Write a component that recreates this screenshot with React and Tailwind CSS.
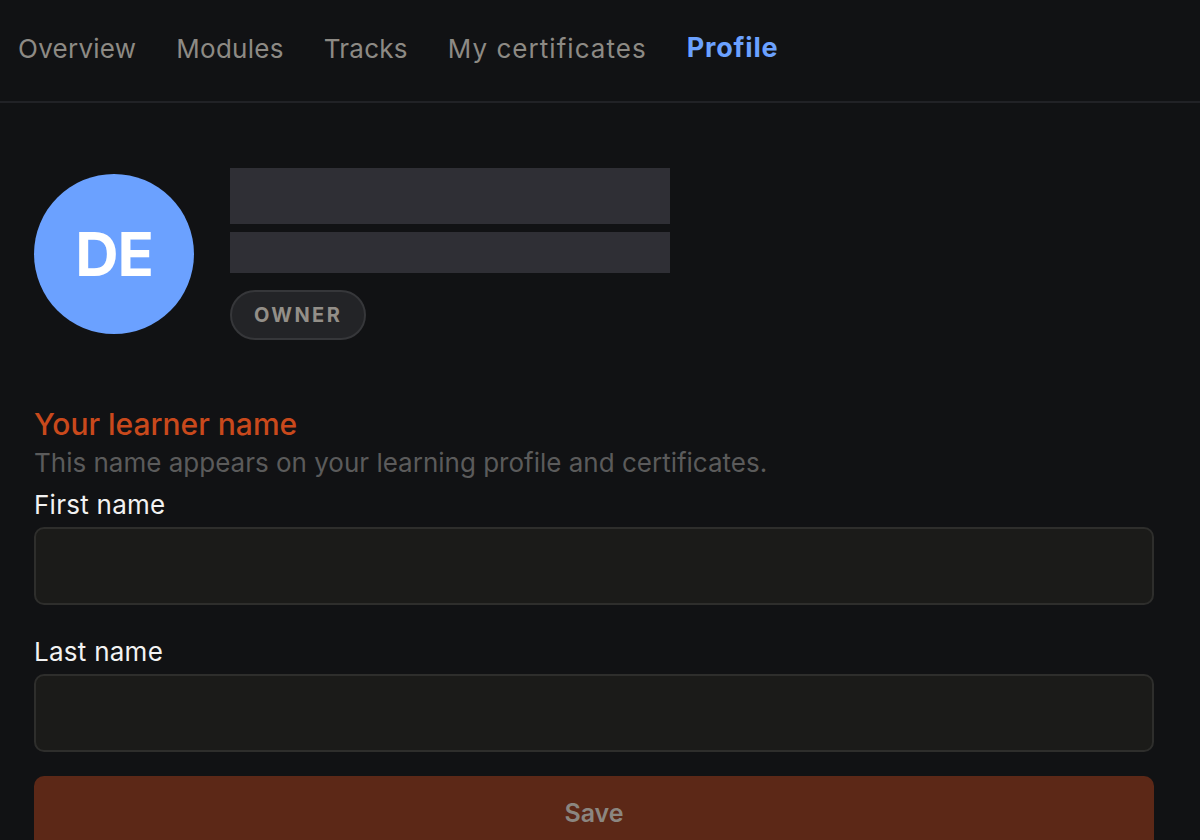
import React from 'react';

const font = { fontFamily: 'Inter, "Noto Sans", sans-serif' };

function NavBar() {
  const items = [
    { label: 'Overview', cls: 'tracking-[0.01em]' },
    { label: 'Modules', cls: 'tracking-[0.01em]' },
    { label: 'Tracks', cls: 'tracking-[0.01em]' },
    { label: 'My certificates', cls: 'tracking-[0.04em]' },
  ];
  return (
    <nav className="h-[103px] border-b-2 border-[#212226] flex items-center gap-10 px-[18px] pb-[4px]">
      {items.map((item) => (
        <span key={item.label} className={`text-[26px] text-[#8d8a84] ${item.cls}`}>
          {item.label}
        </span>
      ))}
      <span className="text-[27px] tracking-[0.03em] font-bold text-[#6ba1ff]">Profile</span>
    </nav>
  );
}

function Field({ label }) {
  return (
    <div className="flex flex-col">
      <label className="text-[26px] tracking-[0.01em] text-[#f2f2f2] leading-[32px] mb-[6px]">{label}</label>
      <input className="h-[78px] w-full rounded-[10px] bg-[#1b1b19] border-2 border-[#2e2e2c] outline-none" />
    </div>
  );
}

export default function App() {
  return (
    <div style={font} className="min-h-screen bg-[#111214] overflow-hidden">
      <NavBar />
      <main className="pl-[34px] pr-[46px]">
        <div className="flex items-start gap-9 pt-[65px]">
          <div className="mt-[6px] w-[160px] h-[160px] rounded-full bg-[#6ba1ff] flex items-center justify-center">
            <span className="text-white font-bold text-[60px] tracking-[-0.02em]">DE</span>
          </div>
          <div className="flex flex-col">
            <div className="w-[440px] h-[56px] bg-[#2f2f35]" />
            <div className="w-[440px] h-[41px] bg-[#2f2f35] mt-[8px]" />
            <span className="mt-[17px] self-start h-[50px] px-[22px] rounded-full bg-[#232427] border-2 border-[#36373a] flex items-center text-[20px] font-bold tracking-[0.12em] text-[#938f88]">
              OWNER
            </span>
          </div>
        </div>

        <h2 className="mt-[64px] text-[30px] font-medium leading-[40px] text-[#c9491c]">Your learner name</h2>
        <p className="text-[26px] leading-[32px] text-[#5b5b5b] mt-[3px]">
          This name appears on your learning profile and certificates.
        </p>
        <div className="mt-[10px] flex flex-col gap-[31px]">
          <Field label="First name" />
          <Field label="Last name" />
        </div>
        <button className="mt-[24px] w-full h-[76px] rounded-[10px] bg-[#5c2817] text-[25px] font-semibold text-[#8b8680]">
          Save
        </button>
      </main>
    </div>
  );
}
